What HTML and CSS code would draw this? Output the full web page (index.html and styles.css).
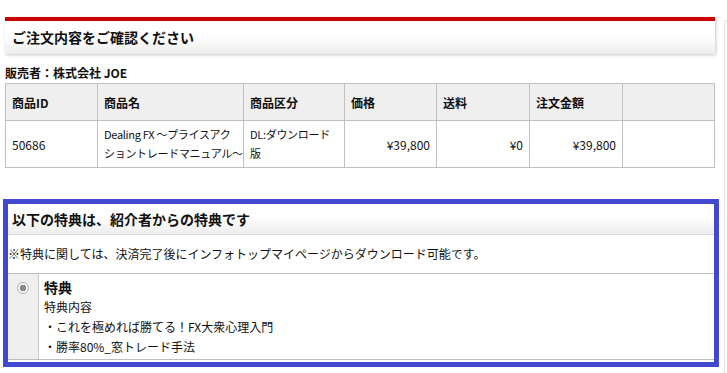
FILE: index.html
```html
<!DOCTYPE html>
<html lang="ja">
  <head>
    <meta charset="UTF-8">
    <title>ご注文内容をご確認ください</title>
    <link rel="stylesheet" href="styles.css">
  </head>
  <body>
    <div class="page">
      <div class="main">
        <div class="order-head">
          <h2>ご注文内容をご確認ください</h2>
        </div>
        <p class="seller">販売者：株式会社 JOE</p>
        <table class="items">
          <thead>
            <tr>
              <th class="c-id">商品ID</th>
              <th class="c-name">商品名</th>
              <th class="c-kind">商品区分</th>
              <th class="c-price">価格</th>
              <th class="c-ship">送料</th>
              <th class="c-total">注文金額</th>
              <th></th>
            </tr>
          </thead>
          <tbody>
            <tr>
              <td>50686</td>
              <td class="wrap">Dealing FX ～プライスアク<br>ショントレードマニュアル～</td>
              <td class="wrap">DL:ダウンロード<br>版</td>
              <td class="num">¥39,800</td>
              <td class="num">¥0</td>
              <td class="num">¥39,800</td>
              <td></td>
            </tr>
          </tbody>
        </table>

        <div class="bonus">
          <div class="bonus-head">
            <h2>以下の特典は、紹介者からの特典です</h2>
          </div>
          <p class="bonus-note">※特典に関しては、決済完了後にインフォトップマイページからダウンロード可能です。</p>
          <div class="bonus-row">
            <div class="bonus-pick">
              <span class="radio"></span>
            </div>
            <div class="bonus-body">
              <h3>特典</h3>
              <p>特典内容</p>
              <p>・これを極めれば勝てる！FX大衆心理入門</p>
              <p>・勝率80%_窓トレード手法</p>
            </div>
          </div>
        </div>
      </div>
      <div class="side"></div>
    </div>
  </body>
</html>
```

FILE: styles.css
```css
body {
  margin: 0;
  background: #fff;
  color: #111;
  font-family: "Noto Sans CJK JP", "Noto Sans", sans-serif;
  font-size: 12px;
  overflow: hidden;
}

h2, h3, p {
  margin: 0;
}

.page {
  display: flex;
  align-items: flex-start;
  padding: 17px 0 0 5px;
  height: 356px;
  overflow: hidden;
}

.main {
  width: 710px;
  flex: none;
}

/* edge of the neighbouring panel, mostly off screen */
.side {
  flex: 1;
  min-width: 0;
  height: 360px;
  margin: 3px 0 0 9px;
  border: 1px solid #e2e2e2;
  border-right: 0;
  border-radius: 5px 0 0 5px;
}

/* order heading */
.order-head {
  border-top: 4px solid #cc0000;
  height: 33px;
  background: linear-gradient(#fff 45%, #ececec);
  box-shadow: 1px 1px 3px rgba(0, 0, 0, 0.22);
}

.order-head h2 {
  font-size: 14px;
  font-weight: bold;
  line-height: 33px;
  padding-left: 7px;
}

.seller {
  margin: 11px 0 2px;
  font-weight: bold;
  line-height: 16px;
}

/* items table */
.items {
  width: 710px;
  border-collapse: collapse;
  table-layout: fixed;
}

.items th,
.items td {
  border: 1px solid #c0c0c0;
  padding: 0 6px;
  text-align: left;
  line-height: 19px;
  white-space: nowrap;
  overflow: hidden;
}

.items th {
  background: #efefef;
  height: 36px;
  font-weight: bold;
}

.items td {
  height: 46px;
}

.items td.wrap {
  font-size: 11px;
  letter-spacing: -0.3px;
}

.items td.num {
  text-align: right;
}

.c-id { width: 79px; }
.c-name { width: 133px; }
.c-kind { width: 88px; }
.c-price { width: 79px; }
.c-ship { width: 80px; }
.c-total { width: 80px; }

/* bonus box */
.bonus {
  margin: 31px 0 0 -2px;
  width: 706px;
  border: 5px solid #4049cf;
}

.bonus-head {
  height: 30px;
  background: linear-gradient(#fff 40%, #ededed);
  border-bottom: 1px solid #dcdcdc;
}

.bonus-head h2 {
  font-size: 14px;
  font-weight: bold;
  line-height: 30px;
  padding-left: 4px;
}

.bonus-note {
  line-height: 38px;
  border-bottom: 1px solid #bdbdbd;
}

.bonus-row {
  display: flex;
  border-bottom: 1px solid #bdbdbd;
  margin-bottom: 2px;
}

.bonus-pick {
  width: 30px;
  flex: none;
  background: #efefef;
  border-right: 1px solid #c8c8c8;
  display: flex;
  justify-content: center;
  padding-top: 8px;
  height: 77px;
}

.radio {
  width: 10px;
  height: 10px;
  border: 1px solid #b5b5b5;
  border-radius: 50%;
  background: radial-gradient(circle, #8a8a8a 0 3px, #f4f4f4 3.5px);
}

.bonus-body {
  padding: 4px 5px 0;
}

.bonus-body h3 {
  font-size: 14px;
  font-weight: bold;
  line-height: 18px;
  margin-bottom: 1px;
}

.bonus-body p {
  line-height: 20px;
}
```
